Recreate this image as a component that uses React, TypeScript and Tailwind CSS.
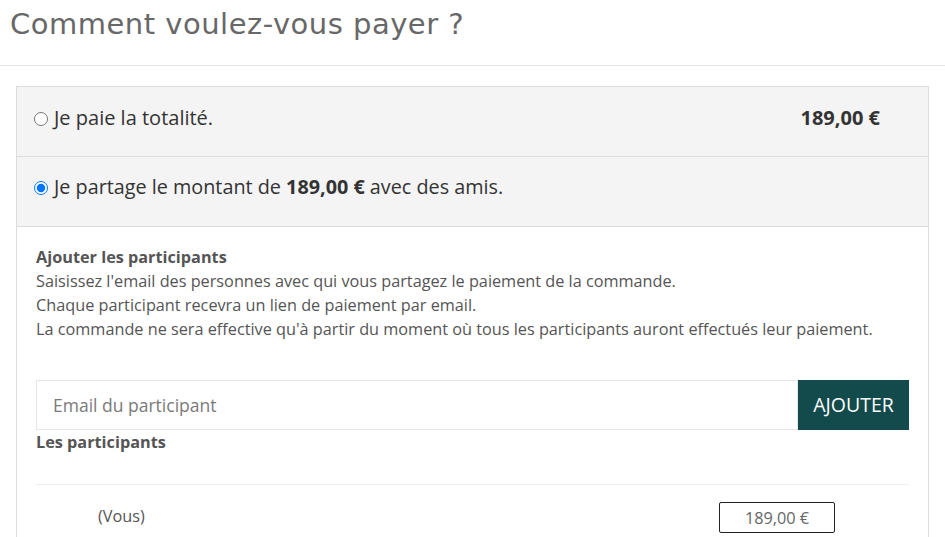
import { useState } from "react";

function App() {
  const [mode, setMode] = useState<"all" | "share">("share");
  const [email, setEmail] = useState("");

  return (
    <div className="min-h-screen bg-white font-['Open_Sans',sans-serif] text-[#333]">
      <div className="h-[66px] border-b border-[#e6e6e6] pl-[10px] pt-[1px]">
        <h1 className="font-['DejaVu_Sans',sans-serif] text-[29px] leading-[46px] font-normal tracking-[0.5px] text-[#686868]">
          Comment voulez-vous payer ?
        </h1>
      </div>

      <div className="ml-[16px] mt-[20px] w-[913px] border border-[#dcdcdc]">
        <label className="flex h-[69px] cursor-pointer items-start bg-[#f4f4f4] pl-[17px] pr-[48px] pt-[17px]">
          <input
            type="radio"
            name="mode"
            className="mt-[8px] h-[14px] w-[14px] shrink-0"
            checked={mode === "all"}
            onChange={() => setMode("all")}
          />
          <span className="ml-[6px] flex-1 text-[20px] leading-[28px]">Je paie la totalité.</span>
          <span className="text-[20px] leading-[28px] font-bold">189,00 €</span>
        </label>
        <label className="flex h-[70px] cursor-pointer items-start border-t border-[#dcdcdc] bg-[#f4f4f4] pl-[17px] pt-[16px]">
          <input
            type="radio"
            name="mode"
            className="mt-[8px] h-[14px] w-[14px] shrink-0"
            checked={mode === "share"}
            onChange={() => setMode("share")}
          />
          <span className="ml-[6px] text-[19.8px] leading-[28px]">
            Je partage le montant de <b>189,00 €</b> avec des amis.
          </span>
        </label>

        <div className="border-t border-[#dcdcdc] px-[19px] pt-[18px] pb-[4px] text-[16.25px] leading-[24px] text-[#555]">
          <p className="font-bold">Ajouter les participants</p>
          <p>Saisissez l'email des personnes avec qui vous partagez le paiement de la commande.</p>
          <p>Chaque participant recevra un lien de paiement par email.</p>
          <p>La commande ne sera effective qu'à partir du moment où tous les participants auront effectués leur paiement.</p>

          <div className="mt-[39px] flex h-[50px]">
            <input
              className="h-full flex-1 border border-[#e6e6e6] px-[16px] text-[17.5px] text-[#555] outline-none placeholder:text-[#7a7a7a]"
              placeholder="Email du participant"
              value={email}
              onChange={(e) => setEmail(e.target.value)}
            />
            <button
              type="button"
              className="h-full w-[111px] bg-[#134a4c] text-[19.5px] text-white"
            >
              AJOUTER
            </button>
          </div>
          <p className="font-bold">Les participants</p>

          <div className="mt-[30px] border-t border-[#efefef] pt-[17px]">
            <div className="flex items-center">
              <span className="ml-[62px] mt-[-3px] flex-1 text-[#555]">(Vous)</span>
              <span className="mr-[74px] flex h-[31px] w-[116px] items-center justify-center rounded-[2px] border border-[#222] text-[#666]">
                189,00 €
              </span>
            </div>
          </div>
        </div>
      </div>
    </div>
  );
}

export default App;
